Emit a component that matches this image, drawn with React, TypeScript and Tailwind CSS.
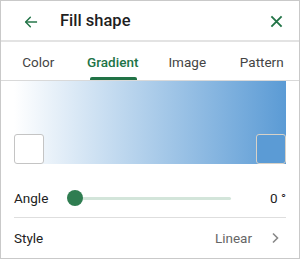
import React from "react";

export default function App() {
  return (
    <div className="w-[300px] h-[259px] bg-white border border-[#c9c9c9] flex flex-col overflow-hidden" style={{ fontFamily: "Roboto, 'Noto Sans', sans-serif" }}>
      <div className="h-[41px] flex items-center border-b-2 border-[#e3e3e3] shrink-0 pt-[2px]">
        <div className="w-[59px] flex justify-center pl-[1px]">
          <svg width="16" height="16" viewBox="0 0 24 24" fill="none" stroke="#217346" strokeWidth="2.2" strokeLinecap="square">
            <path d="M20 12H5" />
            <path d="M11 5l-7 7 7 7" strokeLinecap="round" strokeLinejoin="round" />
          </svg>
        </div>
        <div className="flex-1 text-[16.5px] font-medium text-[#1f1f1f]">Fill shape</div>
        <div className="w-[46px] flex justify-center">
          <svg width="13" height="13" viewBox="0 0 14 14" fill="none" stroke="#217346" strokeWidth="2">
            <path d="M1.5 1.5l11 11M12.5 1.5l-11 11" />
          </svg>
        </div>
      </div>
      <div className="h-[39px] flex items-stretch border-b border-[#d9d9d9] shrink-0 text-[13.5px] text-[#444] pt-[2px]">
        <div className="w-[75px] flex items-center justify-center">Color</div>
        <div className="w-[75px] relative flex items-center justify-center text-[#217346] font-medium">
          Gradient
          <div className="absolute bottom-0 left-[14px] w-[47px] h-[3px] bg-[#217346] rounded-t-[2px]" />
        </div>
        <div className="w-[75px] flex items-center justify-center">Image</div>
        <div className="w-[75px] flex items-center justify-center">Pattern</div>
      </div>
      <div className="px-[13px]">
        <div className="h-[83px] flex items-end justify-between" style={{ background: "linear-gradient(to right, #ffffff, #5b9bd5)" }}>
          <div className="w-[30px] h-[30px] bg-white border border-[#c4c4c4] rounded-[3px]" />
          <div className="w-[30px] h-[30px] bg-[#5b9bd5] border border-[#d8d2c8] rounded-[3px]" />
        </div>
        <div className="mt-[15px] h-[39px] flex items-center border-b border-[#dedede]">
          <span className="text-[13.5px] text-[#222] w-[53px]">Angle</span>
          <div className="relative w-[164px] h-[16px] flex items-center">
            <div className="absolute left-[8px] right-0 h-[3px] bg-[#d3e5da] rounded-full" />
            <div className="absolute left-0 w-[16px] h-[16px] rounded-full bg-[#2f7d51]" />
          </div>
          <span className="ml-auto text-[13.5px] text-[#222]">0 °</span>
        </div>
        <div className="h-[40px] flex items-center">
          <span className="text-[13.5px] text-[#222]">Style</span>
          <span className="ml-auto text-[13.5px] text-[#666]">Linear</span>
          <svg className="ml-[19px] mr-[7px]" width="8" height="12" viewBox="0 0 8 12" fill="none" stroke="#888" strokeWidth="1.6">
            <path d="M2 1.5l4.5 4.5L2 10.5" />
          </svg>
        </div>
      </div>
    </div>
  );
}
